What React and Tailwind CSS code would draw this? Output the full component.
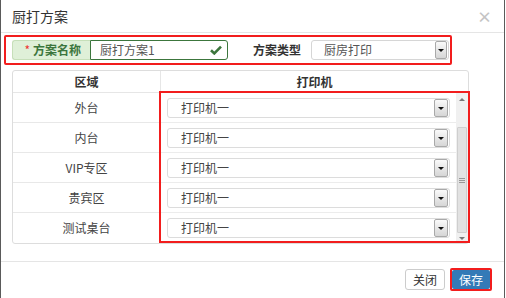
import React from 'react';

const rows = ['外台', '内台', 'VIP专区', '贵宾区', '测试桌台'];

function Arrow({ className = '' }) {
  return (
    <div className={`flex items-center justify-center border border-[#a9a9a9] rounded-[2px] bg-gradient-to-b from-[#fafafa] to-[#d6d6d6] ${className}`}>
      <div className="w-0 h-0 border-x-[3px] border-x-transparent border-t-[3px] border-t-[#111] mt-[1px]" />
    </div>
  );
}

function PrinterSelect() {
  return (
    <div className="flex items-center h-[20px] w-[283px] border border-[#dcdcdc] rounded-[3px] bg-white pl-[13px] pr-[1px]">
      <span className="flex-1 text-[12px] text-[#444]">打印机一</span>
      <Arrow className="w-[14px] h-[18px]" />
    </div>
  );
}

export default function App() {
  return (
    <div className="w-[506px] h-[298px] overflow-hidden bg-white font-['Noto_Sans_CJK_SC',sans-serif]">
      <div className="w-[505px] h-[298px] border-x border-[#5a5a5a] bg-white">
        {/* 标题 */}
        <div className="flex items-center justify-between h-[33px] border-b border-[#e5e5e5] pl-[11px] pr-[12px]">
          <span className="text-[14px] text-[#333]">厨打方案</span>
          <span className="text-[15px] font-bold text-[#c4c4c4] leading-none">×</span>
        </div>

        {/* 方案 */}
        <div className="ml-[3px] mt-[2px] w-[448px] h-[30px] border-2 border-[#f21d1d] rounded-[2px] flex items-center pl-[6px]">
          <div className="flex h-[20px]">
            <div className="w-[78px] flex items-center justify-end pr-[9px] bg-[#dff0d8] border border-[#c6dfb9] border-r-0 rounded-l-[3px] text-[12px] font-bold text-[#3c763d]">
              <span className="text-[#e33] mr-[3px] font-normal">*</span>方案名称
            </div>
            <div className="w-[138px] flex items-center border border-[#3c763d] rounded-r-[3px] pl-[9px] pr-[5px]">
              <span className="flex-1 text-[12px] text-[#555]">厨打方案1</span>
              <svg width="12" height="10" viewBox="0 0 12 10">
                <path d="M1 5.2 L4.3 8.4 L11 1.6" fill="none" stroke="#3c763d" strokeWidth="2.6" />
              </svg>
            </div>
          </div>
          <span className="ml-[25px] text-[12px] font-bold text-[#333]">方案类型</span>
          <div className="ml-[10px] flex items-center h-[20px] w-[138px] border border-[#d6d6d6] rounded-[3px] pl-[12px] pr-[1px]">
            <span className="flex-1 text-[12px] text-[#555]">厨房打印</span>
            <Arrow className="w-[12px] h-[18px]" />
          </div>
        </div>

        {/* 表格 */}
        <div className="relative ml-[11px] mt-[5px] w-[457px] border border-[#dddddd] rounded-[3px]">
          <div className="flex h-[22px] border-b border-[#e6e6e6] text-[12px] font-bold text-[#333]">
            <div className="w-[148px] flex items-center justify-center border-r border-[#e6e6e6]">区域</div>
            <div className="flex-1 flex items-center justify-center">打印机</div>
          </div>
          <div className="flex">
            <div className="w-[148px] border-r border-[#e6e6e6]">
              {rows.map((r, i) => (
                <div
                  key={r}
                  className={`h-[30px] flex items-center justify-center text-[12px] text-[#444] ${i < rows.length - 1 ? 'border-b border-[#e8e8e8]' : ''}`}
                >
                  {r}
                </div>
              ))}
            </div>
            <div className="flex-1 flex">
              <div className="flex-1">
                {rows.map((r, i) => (
                  <div
                    key={r}
                    className={`h-[30px] flex items-center pl-[6px] ${i < rows.length - 1 ? 'border-b border-[#ececec]' : ''}`}
                  >
                    <PrinterSelect />
                  </div>
                ))}
              </div>
              {/* 滚动条 */}
              <div className="w-[12px] bg-[#f0f0f0] flex flex-col items-center">
                <div className="h-[12px] flex items-center justify-center">
                  <div className="w-0 h-0 border-x-[3px] border-x-transparent border-b-[3px] border-b-[#777]" />
                </div>
                <div className="mt-[22px] w-[10px] h-[106px] bg-[#e2e2e2] border border-[#cfcfcf] rounded-[1px] flex flex-col items-center justify-center gap-[1px]">
                  <div className="w-[6px] h-px bg-[#999]" />
                  <div className="w-[6px] h-px bg-[#999]" />
                  <div className="w-[6px] h-px bg-[#999]" />
                </div>
                <div className="flex-1" />
                <div className="h-[10px] flex items-center justify-center">
                  <div className="w-0 h-0 border-x-[3px] border-x-transparent border-t-[3px] border-t-[#777]" />
                </div>
              </div>
            </div>
          </div>
          <div className="absolute left-[146px] top-[20px] w-[311px] h-[152px] border-2 border-[#f21d1d] pointer-events-none" />
        </div>

        {/* 底部 */}
        <div className="mt-[17px] border-t border-[#e5e5e5] flex justify-end items-center pt-[6px] pr-[12px]">
          <button className="h-[21px] w-[40px] border border-[#cccccc] rounded-[3px] bg-white text-[12px] text-[#333]">关闭</button>
          <div className="ml-[5px] border-2 border-[#f21d1d] rounded-[2px]">
            <button className="block h-[19px] w-[38px] bg-[#337ab7] rounded-[2px] text-[12px] text-white">保存</button>
          </div>
        </div>
      </div>
    </div>
  );
}
